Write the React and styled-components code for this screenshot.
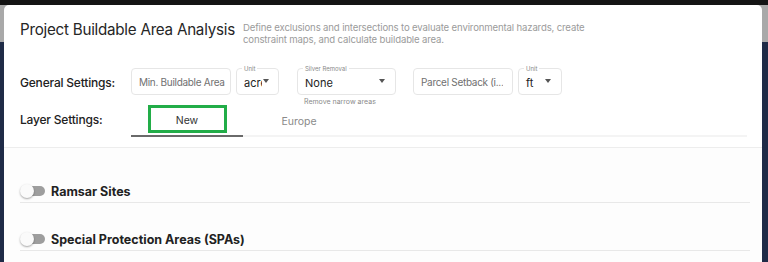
import styled, { createGlobalStyle } from "styled-components";

const GlobalStyle = createGlobalStyle`
  html, body {
    margin: 0;
    height: 100%;
  }
  body {
    font-family: Inter, "Noto Sans", sans-serif;
    background: linear-gradient(
      to bottom,
      #141414 0px,
      #141414 5px,
      #a9a9a9 5px,
      #a9a9a9 42px,
      #1f2b47 42px
    );
    overflow: hidden;
  }
`;

function App() {
  return (
    <>
      <GlobalStyle />
      <Page>
        <Modal>
          <Top>
            <Header>
              <Title>Project Buildable Area Analysis</Title>
              <Description>
                Define exclusions and intersections to evaluate environmental hazards, create
                constraint maps, and calculate buildable area.
              </Description>
            </Header>

            <SettingsRow>
              <RowLabel>General Settings:</RowLabel>
              <Fields>
                <Field width={100}>
                  <Placeholder>Min. Buildable Area</Placeholder>
                </Field>
                <Field width={43}>
                  <FloatLabel>Unit</FloatLabel>
                  <Value clip>acre</Value>
                  <Arrow right={9} />
                </Field>
                <FieldStack>
                  <Field width={99}>
                    <FloatLabel>Silver Removal</FloatLabel>
                    <Value>None</Value>
                    <Arrow right={10} />
                  </Field>
                  <Helper>Remove narrow areas</Helper>
                </FieldStack>
                <Field width={100}>
                  <Placeholder>Parcel Setback (i...</Placeholder>
                </Field>
                <Field width={44}>
                  <FloatLabel>Unit</FloatLabel>
                  <Value>ft</Value>
                  <Arrow right={10} />
                </Field>
              </Fields>
            </SettingsRow>

            <LayerRow>
              <RowLabel>Layer Settings:</RowLabel>
              <TabList>
                <Tab active>
                  <Highlight>New</Highlight>
                </Tab>
                <Tab>Europe</Tab>
              </TabList>
            </LayerRow>
          </Top>

          <Body>
            <LayerItem>
              <Toggle />
              <LayerName>Ramsar Sites</LayerName>
            </LayerItem>
            <LayerItem>
              <Toggle />
              <LayerName>Special Protection Areas (SPAs)</LayerName>
            </LayerItem>
          </Body>
        </Modal>
      </Page>
    </>
  );
}

const Page = styled.div`
  padding: 5px 6px 0 4px;
  height: 100vh;
  box-sizing: border-box;
`;

const Modal = styled.div`
  background: #fff;
  border-radius: 5px 5px 0 0;
  height: 100%;
  display: flex;
  flex-direction: column;
  overflow: hidden;
`;

const Top = styled.div`
  padding: 0 14px 0 16px;
  border-bottom: 1px solid #ededed;
  box-shadow: 0 1px 2px rgba(0, 0, 0, 0.03);
`;

const Header = styled.div`
  display: flex;
  align-items: flex-start;
  padding-top: 15px;
  height: 48px;
  box-sizing: border-box;
`;

const Title = styled.h1`
  margin: 1px 0 0 0;
  width: 223px;
  flex-shrink: 0;
  font-size: 15.2px;
  line-height: 18px;
  font-weight: 400;
  color: #262626;
  white-space: nowrap;
  letter-spacing: -0.25px;
`;

const Description = styled.p`
  margin: 2px 0 0 0;
  width: 370px;
  font-size: 9.6px;
  line-height: 12px;
  color: #9b9b9b;
  letter-spacing: -0.15px;
`;

const SettingsRow = styled.div`
  display: flex;
  align-items: flex-start;
  padding-top: 15px;
  height: 36px;
`;

const RowLabel = styled.div`
  width: 111px;
  flex-shrink: 0;
  font-size: 12px;
  font-weight: 500;
  color: #222;
  padding-top: 7px;
  letter-spacing: -0.2px;
`;

const Fields = styled.div`
  display: flex;
  gap: 5px;
  align-items: flex-start;
`;

const FieldStack = styled.div`
  display: flex;
  flex-direction: column;
  margin-left: 13px;
  margin-right: 12px;
`;

const Field = styled.div`
  position: relative;
  width: ${(p) => p.width}px;
  height: 27px;
  box-sizing: border-box;
  border: 1px solid #e6e6e6;
  border-radius: 4px;
  display: flex;
  align-items: center;
  padding-left: 7px;
`;

const Placeholder = styled.span`
  font-size: 10px;
  color: #707070;
  white-space: nowrap;
  overflow: hidden;
  letter-spacing: -0.3px;
`;

const FloatLabel = styled.span`
  position: absolute;
  top: -4px;
  left: 5px;
  padding: 0 2px;
  background: #fff;
  font-size: 6px;
  line-height: 7px;
  color: #888;
  white-space: nowrap;
`;

const Value = styled.span`
  font-size: 11px;
  color: #222;
  padding-top: 3px;
  ${(p) => (p.clip ? "width: 18px; overflow: hidden; white-space: nowrap;" : "")}
`;

const Arrow = styled.span`
  position: absolute;
  right: ${(p) => p.right}px;
  top: 10px;
  width: 0;
  height: 0;
  border-left: 3.5px solid transparent;
  border-right: 3.5px solid transparent;
  border-top: 4px solid #555;
`;

const Helper = styled.span`
  font-size: 7px;
  color: #8a8a8a;
  padding: 2px 0 0 7px;
`;

const LayerRow = styled.div`
  display: flex;
  align-items: flex-start;
  height: 43px;
  padding-top: 1px;
  margin-bottom: -1px;
`;

const TabList = styled.div`
  display: flex;
  width: 616px;
  border-bottom: 2px solid #f4f4f4;
  height: 32px;
  box-sizing: border-box;
`;

const Tab = styled.div`
  width: 112px;
  height: 32px;
  box-sizing: border-box;
  display: flex;
  align-items: ${(p) => (p.active ? "flex-start" : "center")};
  justify-content: center;
  font-size: 10.5px;
  color: ${(p) => (p.active ? "#333" : "#8a8a8a")};
  border-bottom: 2px solid ${(p) => (p.active ? "#6a6a6a" : "transparent")};
  margin-bottom: -2px;
  padding-top: ${(p) => (p.active ? 0 : 3)}px;
`;

const Highlight = styled.span`
  width: 79px;
  height: 28px;
  box-sizing: border-box;
  border: 3px solid #22ad48;
  display: flex;
  align-items: center;
  justify-content: center;
  padding-top: 3px;
`;

const Body = styled.div`
  flex: 1;
  background: #fdfdfd;
  padding: 32px 12px 0 16px;
  display: flex;
  flex-direction: column;
  gap: 25px;
`;

const LayerItem = styled.div`
  display: flex;
  align-items: center;
  gap: 6px;
  height: 22px;
  border-bottom: 1px solid #e8e8e8;
`;

const Toggle = styled.span`
  position: relative;
  width: 25px;
  height: 12px;
  flex-shrink: 0;
  &::before {
    content: "";
    position: absolute;
    left: 5px;
    top: 1px;
    width: 20px;
    height: 10px;
    border-radius: 5px;
    background: #9e9e9e;
  }
  &::after {
    content: "";
    position: absolute;
    left: 0;
    top: -1px;
    width: 14px;
    height: 14px;
    border-radius: 50%;
    background: #fafafa;
    box-shadow: 0 1px 2px rgba(0, 0, 0, 0.35);
  }
`;

const LayerName = styled.span`
  font-size: 12.5px;
  font-weight: 700;
  color: #222;
`;

export default App;
